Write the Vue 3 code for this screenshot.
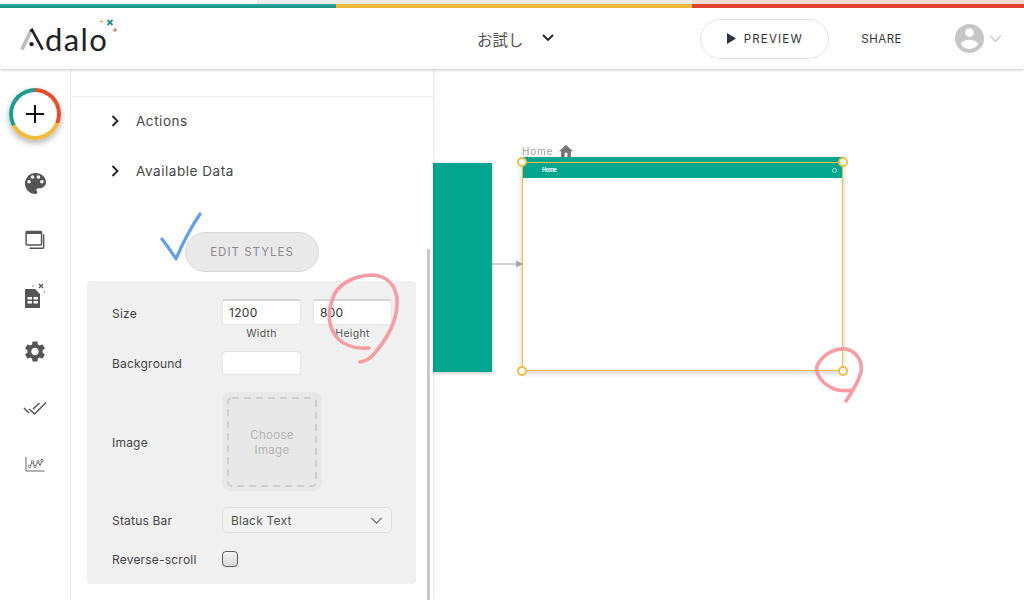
<template>
  <div class="app">
    <div class="top-strip">
      <div class="strip teal"></div>
      <div class="strip yellow"></div>
      <div class="strip red"></div>
    </div>

    <header class="top-bar">
      <div class="logo">
        <svg class="logo-a" viewBox="0 0 26 24">
          <path d="M2 23 L11.5 3" stroke="#bdbdbd" stroke-width="4" fill="none" />
          <path d="M11 3 L13 1.5 L24.5 23" stroke="#222" stroke-width="2.8" fill="none" />
          <circle cx="12.5" cy="17" r="2.4" fill="#222" />
        </svg>
        <span class="logo-text">dalo</span>
        <svg class="logo-spark" viewBox="0 0 20 16">
          <path d="M8.5 1 L13.5 6 M13.5 1 L8.5 6" stroke="#1f8f8f" stroke-width="1.8" />
          <path d="M1 2.5 H4 M2.5 1 V4" stroke="#f2bf5c" stroke-width="1" />
          <path d="M14 11 H18 M16 9 V13" stroke="#e0604c" stroke-width="1" />
        </svg>
      </div>
      <div class="app-name">
        <span>お試し</span>
        <svg class="name-chevron" viewBox="0 0 12 8">
          <path d="M1 1 L6 6 L11 1" fill="none" stroke="#222" stroke-width="1.8" />
        </svg>
      </div>
      <div class="top-actions">
        <button class="preview-btn">
          <svg class="play" viewBox="0 0 10 12"><path d="M0 0 L10 6 L0 12 Z" fill="#2b3148" /></svg>
          PREVIEW
        </button>
        <span class="share">SHARE</span>
        <svg class="avatar" viewBox="2 2 20 20">
          <path fill="#c6c6c6" d="M12 2C6.48 2 2 6.48 2 12s4.48 10 10 10 10-4.48 10-10S17.52 2 12 2zm0 3c1.66 0 3 1.34 3 3s-1.34 3-3 3-3-1.34-3-3 1.34-3 3-3zm0 14.2c-2.5 0-4.71-1.28-6-3.22.03-1.99 4-3.08 6-3.08 1.99 0 5.97 1.09 6 3.08-1.29 1.94-3.5 3.22-6 3.22z" />
        </svg>
        <svg class="avatar-chevron" viewBox="0 0 14 8">
          <path d="M1 1 L7 7 L13 1" fill="none" stroke="#c9c9c9" stroke-width="1.6" />
        </svg>
      </div>
    </header>

    <div class="main">
      <!-- left icon rail -->
      <nav class="rail">
        <button class="add-btn">
          <span class="add-inner">
            <svg viewBox="0 0 22 22" class="plus"><path d="M11 1 V21 M1 11 H21" stroke="#111" stroke-width="2.2" /></svg>
          </span>
        </button>
        <svg class="rail-icon palette" viewBox="3 3 18 18">
          <path fill="#555" d="M12 3c-4.97 0-9 4.03-9 9s4.03 9 9 9c.83 0 1.5-.67 1.5-1.5 0-.39-.15-.74-.39-1.01-.23-.26-.38-.61-.38-.99 0-.83.67-1.5 1.5-1.5H16c2.76 0 5-2.24 5-5 0-4.42-4.03-8-9-8zm-5.5 9c-.83 0-1.5-.67-1.5-1.5S5.67 9 6.5 9 8 9.67 8 10.5 7.33 12 6.5 12zm3-4C8.67 8 8 7.33 8 6.5S8.67 5 9.5 5s1.5.67 1.5 1.5S10.33 8 9.5 8zm5 0c-.83 0-1.5-.67-1.5-1.5S13.67 5 14.5 5s1.5.67 1.5 1.5S15.33 8 14.5 8zm3 4c-.83 0-1.5-.67-1.5-1.5S16.67 9 17.5 9s1.5.67 1.5 1.5-.67 1.5-1.5 1.5z" />
        </svg>
        <svg class="rail-icon screens" viewBox="0 0 22 22">
          <rect x="1.2" y="1.5" width="17" height="15" rx="1" fill="none" stroke="#555" stroke-width="1.6" />
          <path d="M1.2 3.2 H18" stroke="#555" stroke-width="2.4" />
          <path d="M20.5 5 V19 Q20.5 20 19.5 20 H5" fill="none" stroke="#555" stroke-width="1.6" />
        </svg>
        <svg class="rail-icon database" viewBox="0 0 22 26">
          <path fill="#555" d="M1 6 H11 L16 11 V25 H1 Z" />
          <path fill="#fff" d="M3.5 14 H8 V16.5 H3.5 Z M9.5 14 H14 V16.5 H9.5 Z M3.5 18 H8 V20.5 H3.5 Z M9.5 18 H14 V20.5 H9.5 Z" />
          <path d="M15 1 L19 5 M19 1 L15 5" stroke="#555" stroke-width="1.2" />
          <circle cx="9" cy="3" r=".7" fill="#777" />
          <circle cx="20.5" cy="9" r=".7" fill="#777" />
        </svg>
        <svg class="rail-icon gear" viewBox="2.5 2 19 20">
          <path fill="#555" d="M19.14 12.94c.04-.3.06-.61.06-.94 0-.32-.02-.64-.07-.94l2.03-1.58c.18-.14.23-.41.12-.61l-1.92-3.32c-.12-.22-.37-.29-.59-.22l-2.39.96c-.5-.38-1.03-.7-1.62-.94l-.36-2.54c-.04-.24-.24-.41-.48-.41h-3.84c-.24 0-.43.17-.47.41l-.36 2.54c-.59.24-1.13.57-1.62.94l-2.39-.96c-.22-.08-.47 0-.59.22L2.74 8.87c-.12.21-.08.47.12.61l2.03 1.58c-.05.3-.09.63-.09.94s.02.64.07.94l-2.03 1.58c-.18.14-.23.41-.12.61l1.92 3.32c.12.22.37.29.59.22l2.39-.96c.5.38 1.03.7 1.62.94l.36 2.54c.05.24.24.41.48.41h3.84c.24 0 .44-.17.47-.41l.36-2.54c.59-.24 1.13-.56 1.62-.94l2.39.96c.22.08.47 0 .59-.22l1.92-3.32c.12-.22.07-.47-.12-.61l-2.01-1.58zM12 15.6c-1.98 0-3.6-1.62-3.6-3.6s1.62-3.6 3.6-3.6 3.6 1.62 3.6 3.6-1.62 3.6-3.6 3.6z" />
        </svg>
        <svg class="rail-icon checks" viewBox="0 0 24 14">
          <path d="M6 8 L11.5 13 L23 1.5" fill="none" stroke="#555" stroke-width="1.5" />
          <path d="M1 7 L6 12 M10 8 L16.5 2" fill="none" stroke="#555" stroke-width="1.5" />
        </svg>
        <svg class="rail-icon chart" viewBox="0 0 20 16">
          <path d="M1 1 V15 H19.5" fill="none" stroke="#555" stroke-width=".9" />
          <path d="M4.5 10.5 L7.5 6 L10 10.5 L13 6 L15 9.5 L17 5" fill="none" stroke="#555" stroke-width=".9" />
          <g fill="#fff" stroke="#555" stroke-width=".8">
            <circle cx="4.5" cy="10.5" r="1.2" />
            <circle cx="7.5" cy="5.8" r="1.2" />
            <circle cx="10" cy="10.5" r="1.2" />
            <circle cx="13" cy="5.8" r="1.2" />
            <circle cx="17" cy="4.5" r="1.2" />
          </g>
        </svg>
      </nav>

      <!-- settings panel -->
      <aside class="panel">
        <div class="panel-head"></div>
        <div v-for="section in sections" :key="section" class="section-row">
          <svg class="section-chevron" viewBox="0 0 8 12">
            <path d="M1.5 1 L6.5 6 L1.5 11" fill="none" stroke="#222" stroke-width="1.8" />
          </svg>
          <span>{{ section }}</span>
        </div>
        <div class="edit-wrap">
          <button class="edit-btn">EDIT STYLES</button>
        </div>
        <div class="panel-lower">
          <div class="card">
            <div class="row size-row">
              <span class="label size-label">Size</span>
              <div class="size-field">
                <div class="input top-shadow">1200</div>
                <span class="hint">Width</span>
              </div>
              <div class="size-field">
                <div class="input top-shadow">800</div>
                <span class="hint">Height</span>
              </div>
            </div>
            <div class="row background-row">
              <span class="label">Background</span>
              <div class="input color-input"></div>
            </div>
            <div class="row image-row">
              <span class="label image-label">Image</span>
              <div class="image-box">
                <svg class="image-dash" viewBox="0 0 90 90">
                  <rect x="1" y="1" width="88" height="88" rx="4" fill="none" stroke="#c8c8c8" stroke-width="1.6" stroke-dasharray="7 5" />
                </svg>
                <span class="image-text">Choose<br />Image</span>
              </div>
            </div>
            <div class="row status-row">
              <span class="label">Status Bar</span>
              <div class="select">
                <span>Black Text</span>
                <svg class="select-chevron" viewBox="0 0 14 8">
                  <path d="M1 1 L7 7 L13 1" fill="none" stroke="#777" stroke-width="1.6" />
                </svg>
              </div>
            </div>
            <div class="row reverse-row">
              <span class="label">Reverse-scroll</span>
              <span class="checkbox"></span>
            </div>
          </div>
          <div class="scrollbar"></div>
        </div>
      </aside>

      <!-- canvas, screens sit on a free surface -->
      <section class="canvas">
        <div class="prev-screen"></div>
        <svg class="link-arrow" viewBox="0 0 31 10">
          <path d="M0 5 H25" stroke="#aaa" stroke-width="1" />
          <path d="M24 1.5 L31 5 L24 8.5 Z" fill="#aaa" />
        </svg>
        <div class="screen-title">
          <span>Home</span>
          <svg class="home-icon" viewBox="2 3 20 17">
            <path fill="#757575" d="M10 20v-6h4v6h5v-8h3L12 3 2 12h3v8z" />
          </svg>
        </div>
        <div class="screen">
          <div class="screen-bar">
            <span class="bar-title">Home</span>
            <span class="bar-dot"></span>
          </div>
        </div>
        <div class="select-box"></div>
        <span class="handle h-tl"></span>
        <span class="handle h-tr"></span>
        <span class="handle h-bl"></span>
        <span class="handle h-br"></span>
      </section>
    </div>

    <!-- hand drawn marks on top of the screenshot -->
    <svg class="marks" viewBox="0 0 1024 600">
      <path class="mark-blue" d="M162 239 Q169 248 176 259 Q186 235 200 214" />
      <path class="mark-red" d="M369 348 C355 349 342 345 335 335 C327 323 328 308 335 293 C343 281 358 275 373 275 C387 276 395 285 397 298 C398 315 391 333 378 349 C373 355 369 361 360 362" />
      <path class="mark-red" d="M846 401 C851 393 858 384 861 372 C863 361 856 351 846 349 C834 348 822 355 817 366 C815 375 823 384 834 389 C840 391 846 391 852 390" />
    </svg>
  </div>
</template>

<script setup>
// Collapsed sections above the style button
const sections = ['Actions', 'Available Data'];
</script>

<style>
html,
body {
  margin: 0;
  overflow: hidden;
}
</style>

<style scoped>
.app {
  position: relative;
  width: 1024px;
  height: 600px;
  overflow: hidden;
  background: #fff;
  font-family: "Inter", "Noto Sans CJK JP", sans-serif;
  color: #444;
}

/* ===== TOP STRIP ===== */
.top-strip {
  display: flex;
  height: 8px;
}

.strip {
  height: 4px;
  margin-top: 4px;
}

.teal {
  width: 336px;
  background: linear-gradient(#4fb3a8, #1d9c8f 40%, #1d9c8f);
  box-shadow: 257px -4px 0 -0px #eeeeee;
}

.yellow {
  width: 356px;
  background: #f3bb3c;
  box-shadow: 0 -4px 0 #ecebe5;
}

.red {
  width: 332px;
  background: #e2432e;
  box-shadow: 0 -4px 0 #efdcd7;
}

/* ===== HEADER ===== */
.top-bar {
  position: relative;
  z-index: 3;
  display: flex;
  align-items: center;
  height: 61px;
  background: #fff;
  box-shadow: 0 1px 3px rgba(0, 0, 0, 0.22);
}

.logo {
  display: flex;
  align-items: center;
  width: 457px;
  padding-left: 20px;
  flex-shrink: 0;
}

.logo-a {
  width: 24px;
  height: 23px;
  margin-top: 1px;
}

.logo-text {
  font-family: "Lato", sans-serif;
  font-size: 31px;
  line-height: 30px;
  letter-spacing: 1.4px;
  color: #222;
  margin-left: 1px;
}

.logo-spark {
  width: 20px;
  height: 16px;
  margin: -23px 0 0 -9px;
}

.app-name {
  display: flex;
  align-items: center;
  font-size: 15.5px;
  color: #555;
}

.name-chevron {
  width: 12px;
  height: 8px;
  margin-left: 18px;
  margin-top: -2px;
}

.top-actions {
  display: flex;
  align-items: center;
  margin-left: auto;
  padding-right: 22px;
}

.preview-btn {
  display: flex;
  align-items: center;
  justify-content: center;
  gap: 8px;
  width: 129px;
  height: 40px;
  background: #fff;
  border: 1px solid #e6e6e6;
  border-radius: 20px;
  font: 400 11.5px "Inter", sans-serif;
  letter-spacing: 1.2px;
  color: #333;
}

.play {
  width: 9px;
  height: 11px;
}

.share {
  margin-left: 32px;
  font-size: 11.5px;
  letter-spacing: 0.5px;
  color: #333;
}

.avatar {
  width: 29px;
  height: 29px;
  margin-left: 53px;
}

.avatar-chevron {
  width: 13px;
  height: 7px;
  margin-left: 5px;
}

/* ===== MAIN AREA ===== */
.main {
  display: flex;
  height: 531px;
}

.rail {
  display: flex;
  flex-direction: column;
  align-items: center;
  width: 70px;
  flex-shrink: 0;
  padding-top: 19px;
  border-right: 1px solid #ececec;
}

.add-btn {
  width: 52px;
  height: 52px;
  padding: 4px;
  border: none;
  border-radius: 50%;
  background: conic-gradient(#e2512f 0 112deg, #f3bb3c 112deg 242deg, #1d9c8f 242deg 360deg);
  box-shadow: 0 3px 6px rgba(0, 0, 0, 0.3);
}

.add-inner {
  display: flex;
  align-items: center;
  justify-content: center;
  width: 100%;
  height: 100%;
  border-radius: 50%;
  background: #fff;
}

.plus {
  width: 20px;
  height: 20px;
}

.rail-icon {
  display: block;
}

.palette {
  width: 21px;
  height: 21px;
  margin-top: 33px;
}

.screens {
  width: 22px;
  height: 20px;
  margin-top: 36px;
}

.database {
  width: 22px;
  height: 26px;
  margin-top: 33px;
}

.gear {
  width: 20px;
  height: 21px;
  margin-top: 32px;
}

.checks {
  width: 24px;
  height: 14px;
  margin-top: 39px;
}

.chart {
  width: 20px;
  height: 16px;
  margin-top: 41px;
}

/* ===== PANEL ===== */
.panel {
  width: 362px;
  flex-shrink: 0;
  position: relative;
  z-index: 2;
  background: #fff;
  box-shadow: 1px 0 2px rgba(0, 0, 0, 0.12);
}

.panel-head {
  height: 27px;
  border-bottom: 1px solid #eeeeee;
}

.section-row {
  display: flex;
  align-items: center;
  box-sizing: border-box;
  height: 50px;
  padding: 0 0 2px 40px;
  font-size: 13.5px;
  letter-spacing: 0.55px;
  color: #444;
}

.section-chevron {
  width: 8px;
  height: 12px;
  margin-right: 17px;
}

.edit-wrap {
  display: flex;
  padding: 35px 0 0 114px;
}

.edit-btn {
  width: 134px;
  height: 40px;
  border: 1px solid #d9d9d9;
  border-radius: 20px;
  background: #e9e9e9;
  font: 400 11.5px "Inter", sans-serif;
  letter-spacing: 1px;
  color: #8a8a8a;
}

.panel-lower {
  position: relative;
  padding: 9px 0 0 16px;
}

.card {
  width: 329px;
  height: 303px;
  padding-left: 25px;
  box-sizing: border-box;
  background: #f0f0f0;
  border-radius: 4px;
}

.row {
  display: flex;
  align-items: center;
}

.label {
  width: 110px;
  flex-shrink: 0;
  font-size: 12px;
  letter-spacing: 0.2px;
  color: #444;
}

.size-row {
  padding-top: 18px;
  align-items: flex-start;
}

.size-label {
  padding-top: 7px;
}

.size-field {
  display: flex;
  flex-direction: column;
  align-items: center;
  width: 79px;
  margin-right: 12px;
}

.input {
  box-sizing: border-box;
  width: 79px;
  height: 26px;
  padding: 4px 0 0 6px;
  background: #fff;
  border: 1px solid #e4e4e4;
  border-radius: 3px;
  font-size: 12px;
  letter-spacing: 0.3px;
  color: #333;
}

.top-shadow {
  border-top: 2px solid #d6d6d6;
}

.hint {
  margin-top: 2px;
  font-size: 10.5px;
  letter-spacing: 0.3px;
  color: #555;
}

.background-row {
  margin-top: 11px;
}

.color-input {
  height: 24px;
  border-radius: 4px;
}

.image-row {
  margin-top: 17px;
}

.image-label {
  padding-top: 2px;
}

.image-box {
  position: relative;
  display: flex;
  align-items: center;
  justify-content: center;
  box-sizing: border-box;
  width: 100px;
  height: 99px;
  padding-top: 2px;
  background: #e8e8e8;
  border-radius: 8px;
}

.image-dash {
  position: absolute;
  left: 5px;
  top: 5px;
  width: 90px;
  height: 90px;
}

.image-text {
  text-align: center;
  font-size: 11.5px;
  line-height: 15px;
  letter-spacing: 0.3px;
  color: #b4b4b4;
}

.status-row {
  margin-top: 16px;
}

.select {
  display: flex;
  align-items: center;
  justify-content: space-between;
  box-sizing: border-box;
  width: 170px;
  height: 26px;
  padding: 0 8px;
  background: #f2f2f2;
  border: 1px solid #e0e0e0;
  border-radius: 5px;
  font-size: 12px;
  letter-spacing: 0.2px;
  color: #555;
}

.select-chevron {
  width: 13px;
  height: 7px;
}

.reverse-row {
  margin-top: 18px;
}

.checkbox {
  box-sizing: border-box;
  width: 16px;
  height: 16px;
  border: 1px solid #5c5c5c;
  border-radius: 4px;
  background: linear-gradient(#f3f3f3, #d8d8d8);
}

.scrollbar {
  position: absolute;
  left: 356px;
  top: -23px;
  width: 3px;
  height: 360px;
  background: #c9c9c9;
}

/* ===== CANVAS ===== */
.canvas {
  position: relative;
  flex: 1;
  background: #fff;
}

.prev-screen {
  position: absolute;
  left: 0;
  top: 94px;
  width: 59px;
  height: 209px;
  background: #03a58f;
  box-shadow: 0 1px 4px rgba(0, 0, 0, 0.25);
}

.link-arrow {
  position: absolute;
  left: 59px;
  top: 190px;
  width: 31px;
  height: 10px;
}

.screen-title {
  position: absolute;
  left: 89px;
  top: 76px;
  display: flex;
  align-items: center;
  gap: 8px;
  font-size: 10px;
  letter-spacing: 0.8px;
  color: #a0a0a0;
}

.home-icon {
  width: 14px;
  height: 12px;
  margin-left: -2px;
}

.screen {
  position: absolute;
  left: 89px;
  top: 88px;
  width: 321px;
  height: 214px;
  background: #fff;
  box-shadow: 0 2px 6px rgba(0, 0, 0, 0.2);
}

.screen-bar {
  display: flex;
  align-items: center;
  justify-content: space-between;
  height: 21px;
  padding: 5px 6px 0 20px;
  box-sizing: border-box;
  background: #03a58f;
}

.bar-title {
  font-size: 5.5px;
  font-weight: 700;
  letter-spacing: -0.3px;
  color: #fff;
}

.bar-dot {
  width: 3px;
  height: 3px;
  border: 1px solid #a9dfd4;
  border-radius: 50%;
}

.select-box {
  position: absolute;
  left: 89px;
  top: 93px;
  width: 321px;
  height: 209px;
  box-sizing: border-box;
  border: 1px solid #f0bd45;
}

.handle {
  position: absolute;
  box-sizing: border-box;
  width: 10px;
  height: 10px;
  background: #fff;
  border: 2px solid #f0bd45;
  border-radius: 50%;
}

.h-tl { left: 84px; top: 88px; }
.h-tr { left: 405px; top: 88px; }
.h-bl { left: 84px; top: 297px; }
.h-br { left: 405px; top: 297px; }

/* ===== ANNOTATIONS ===== */
.marks {
  position: absolute;
  left: 0;
  top: 0;
  width: 1024px;
  height: 600px;
  z-index: 5;
  pointer-events: none;
}

.marks path {
  fill: none;
  stroke-linecap: round;
  stroke-linejoin: round;
}

.mark-blue {
  stroke: #63a0ec;
  stroke-width: 3.2;
}

.mark-red {
  stroke: #f79ca2;
  stroke-width: 3.6;
}
</style>
